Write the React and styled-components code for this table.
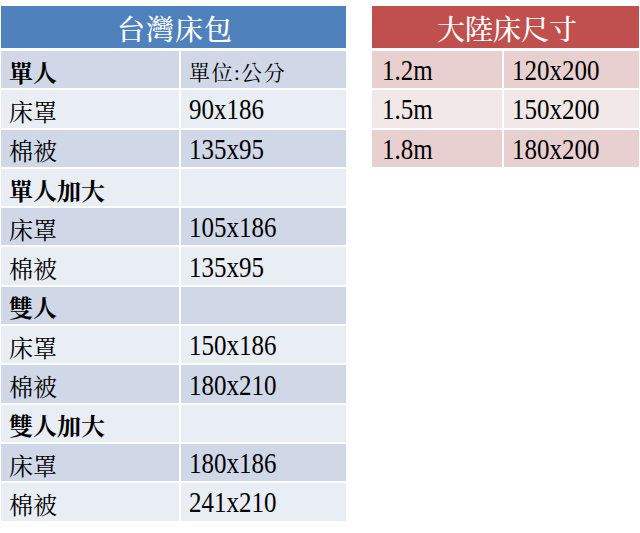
import { createGlobalStyle, styled } from "styled-components";

const GlobalStyle = createGlobalStyle`
    body {
        margin: 0;
        background: #ffffff;
    }
`

const Page = styled.div`
    display: flex;
    align-items: flex-start;
    gap: 26px;
    padding: 6px 0 0 1px;
    width: 640px;
    height: 533px;
    box-sizing: border-box;
`

const Table = styled.div`
    display: grid;
    grid-template-columns: ${(p) => p.$cols};
    grid-template-rows: 43px;
    grid-auto-rows: 37.3px;
    column-gap: 2px;
    row-gap: 2px;
`

const Header = styled.div`
    grid-column: 1 / -1;
    align-self: start;
    height: 42px;
    display: flex;
    align-items: center;
    justify-content: center;
    background: ${(p) => p.$bg};
    color: #ffffff;
    font-family: "Noto Serif CJK TC", "Noto Sans CJK TC", sans-serif;
    font-size: 28px;
    font-weight: 500;
    letter-spacing: ${(p) => p.$spacing}px;
    padding: 2px 0 0 3px;
    box-sizing: border-box;
`

const Cell = styled.div`
    display: flex;
    align-items: center;
    padding: 3px 0 0 ${(p) => p.$pad || 8}px;
    box-sizing: border-box;
    background: ${(p) => p.$bg};
    color: #000000;
    font-family: "Liberation Serif", "Noto Serif CJK TC", "Noto Sans CJK TC", serif;
    font-size: ${(p) => p.$size || 24}px;
    font-weight: ${(p) => (p.$bold ? 700 : 400)};
    letter-spacing: ${(p) => p.$spacing || 0}px;
    white-space: nowrap;
`

const Num = styled.span`
    display: inline-block;
    font-size: 25px;
    transform: scaleY(1.14);
`

const blue = { head: "#4f81bd", dark: "#d0d8e8", light: "#e9edf4" };
const red = { head: "#c0504d", dark: "#e9d0d0", light: "#f3e8e8" };

const twRows = [
    { a: "單人", b: "單位:公分", bold: true, unit: true },
    { a: "床罩", b: "90x186" },
    { a: "棉被", b: "135x95" },
    { a: "單人加大", b: "", bold: true },
    { a: "床罩", b: "105x186" },
    { a: "棉被", b: "135x95" },
    { a: "雙人", b: "", bold: true },
    { a: "床罩", b: "150x186" },
    { a: "棉被", b: "180x210" },
    { a: "雙人加大", b: "", bold: true },
    { a: "床罩", b: "180x186" },
    { a: "棉被", b: "241x210" },
];

const cnRows = [
    { a: "1.2m", b: "120x200" },
    { a: "1.5m", b: "150x200" },
    { a: "1.8m", b: "180x200" },
];

function App() {
    return (
        <>
            <GlobalStyle />
            <Page>
                <Table $cols="178px 165px">
                    <Header $bg={blue.head} $spacing={1}>台灣床包</Header>
                    {twRows.map((r, i) => {
                        const bg = i % 2 === 0 ? blue.dark : blue.light;
                        return [
                            <Cell key={i + "a"} $bg={bg} $bold={r.bold}>{r.a}</Cell>,
                            <Cell key={i + "b"} $bg={bg} $size={r.unit ? 21 : 24} $spacing={r.unit ? 1.5 : 0}>
                                {r.unit ? r.b : <Num>{r.b}</Num>}
                            </Cell>,
                        ];
                    })}
                </Table>
                <Table $cols="130px 135px">
                    <Header $bg={red.head} $spacing={0}>大陸床尺寸</Header>
                    {cnRows.map((r, i) => {
                        const bg = i % 2 === 0 ? red.dark : red.light;
                        return [
                            <Cell key={i + "a"} $bg={bg} $pad={10}><Num>{r.a}</Num></Cell>,
                            <Cell key={i + "b"} $bg={bg}><Num>{r.b}</Num></Cell>,
                        ];
                    })}
                </Table>
            </Page>
        </>
    );
}

export default App;
